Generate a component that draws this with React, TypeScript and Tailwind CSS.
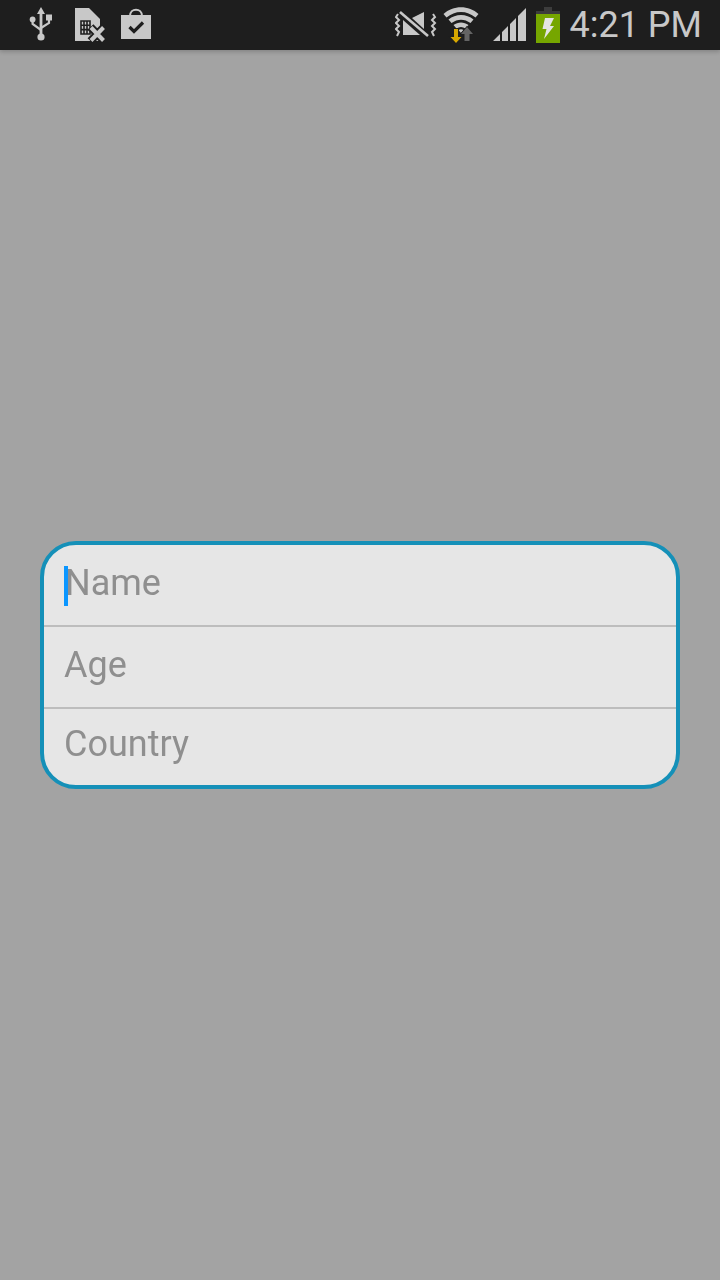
const fieldText = "text-[36px] leading-none text-[#8f8f8f]";

const UsbIcon = () => (
  <svg width="24" height="36" viewBox="0 0 24 36" className="text-[#c8c8c8]">
    <path d="M12 0 L16 7 H13.4 V27 H10.6 V7 H8 Z" fill="currentColor" />
    <circle cx="12" cy="30" r="3.6" fill="currentColor" />
    <circle cx="3.6" cy="12.5" r="2.9" fill="currentColor" />
    <rect x="17" y="7.5" width="6" height="6" fill="currentColor" />
    <path d="M3.6 13 V17 L12 23" stroke="currentColor" strokeWidth="2.2" fill="none" />
    <path d="M20 13 V16 L12 21" stroke="currentColor" strokeWidth="2.2" fill="none" />
  </svg>
);

const SimIcon = () => (
  <svg width="30" height="36" viewBox="0 0 30 36">
    <path d="M0 1 H14 L25 12 V34 H0 Z" fill="#c8c8c8" />
    <path d="M6 14 H15 V27 H6 Z M9 14 V27 M12 14 V27 M6 18.3 H15 M6 22.6 H15" stroke="#1e1e1e" strokeWidth="1.6" fill="none" />
    <path d="M15.5 20 L29 34 M29 20 L15.5 34" stroke="#1e1e1e" strokeWidth="8" />
    <path d="M16 20.5 L28.5 33.5 M28.5 20.5 L16 33.5" stroke="#c8c8c8" strokeWidth="4" />
  </svg>
);

const BagIcon = () => (
  <svg width="32" height="32" viewBox="0 0 32 32">
    <path d="M10 8 C10 -0.5 22 -0.5 22 8" stroke="#c8c8c8" strokeWidth="2" fill="none" />
    <rect x="1" y="7" width="30" height="24" fill="#c8c8c8" />
    <path d="M9.5 19 L14 23.5 L23 14.5" stroke="#1e1e1e" strokeWidth="3.2" fill="none" />
  </svg>
);

const MuteIcon = () => (
  <svg width="42" height="28" viewBox="0 0 42 28">
    <path d="M3 3 L1 6 L4 9 L1 12 L4 15 L1 18 L4 21 L2 25" stroke="#c8c8c8" strokeWidth="2" fill="none" />
    <path d="M38 3 L40 6 L37 9 L40 12 L37 15 L40 18 L37 21 L39 25" stroke="#c8c8c8" strokeWidth="2" fill="none" />
    <path d="M29 1 V18 L17 7 Z" fill="#c8c8c8" />
    <path d="M8 9 V24 H25 Z" fill="#c8c8c8" />
    <path d="M5 1 L33 25" stroke="#c8c8c8" strokeWidth="2.6" />
  </svg>
);

const WifiIcon = () => (
  <svg width="36" height="38" viewBox="0 0 36 38">
    <path d="M0.5 8 C10 -1 26 -1 35.5 8 L32.5 11.5 C24 4 12 4 3.5 11.5 Z" fill="#c8c8c8" />
    <path d="M5.5 13.5 C12.5 7.5 23.5 7.5 30.5 13.5 L27.5 17 C21.5 12.5 14.5 12.5 8.5 17 Z" fill="#c8c8c8" />
    <path d="M10.5 19 C15 15.5 21 15.5 25.5 19 L22.5 22.5 C19.5 20.5 16.5 20.5 13.5 22.5 Z" fill="#c8c8c8" />
    <path d="M15.5 24 C17 23 19 23 20.5 24 L18 27 Z" fill="#c8c8c8" />
    <path d="M24 21 L30 28 H26.5 V35 H21.5 V28 H18 Z" fill="#646464" stroke="#1e1e1e" strokeWidth="1.5" paintOrder="stroke" />
    <path d="M11 23 H15 V31 H18.5 L13 37 L7.5 31 H11 Z" fill="#d8a800" stroke="#1e1e1e" strokeWidth="1.5" paintOrder="stroke" />
  </svg>
);

const SignalIcon = () => (
  <svg width="33" height="34" viewBox="0 0 33 34">
    <path d="M0 33 L7 26 V33 Z M9 33 V24 L15 18 V33 Z M17 33 V16 L23 10 V33 Z M25 33 V8 L33 0 V33 Z" fill="#c8c8c8" />
  </svg>
);

const BatteryIcon = () => (
  <svg width="24" height="36" viewBox="0 0 24 36">
    <rect x="8" y="0" width="8" height="4" fill="#3c3c3c" />
    <rect x="0" y="4" width="24" height="3" fill="#3c3c3c" />
    <rect x="0" y="7" width="24" height="29" fill="#76a600" />
    <path d="M9 11 H18 L14 19 H18 L8 32 L10.5 22 H6.5 Z" fill="#e4e4e4" />
  </svg>
);

const App = () => {
  return (
    <div className="flex h-[1280px] w-[720px] flex-col bg-[#a3a3a3] font-['Roboto',sans-serif]">
      {/* status bar */}
      <header className="flex h-[50px] shrink-0 items-center justify-between bg-[#1e1e1e] pl-[29px] pr-[18px] shadow-[0_2px_4px_rgba(0,0,0,0.18)]">
        <div className="flex items-center">
          <UsbIcon />
          <div className="ml-[22px]"><SimIcon /></div>
          <div className="mb-[3px] ml-[15px]"><BagIcon /></div>
        </div>
        <div className="flex items-center">
          <MuteIcon />
          <div className="ml-[6px]"><WifiIcon /></div>
          <div className="ml-[14px]"><SignalIcon /></div>
          <div className="ml-[10px]"><BatteryIcon /></div>
          <span className="ml-[10px] text-[36px] font-normal leading-none text-[#c8c8c8]">4:21 PM</span>
        </div>
      </header>

      {/* form */}
      <main className="flex flex-1 flex-col px-10 pt-[491px]">
        <div className="flex h-[248px] flex-col overflow-hidden rounded-[36px] border-4 border-[#1590b8] bg-[#e6e6e6] will-change-transform">
          <div className="flex h-[82px] items-center border-b-2 border-[#bdbdbd] pb-1 pl-5">
            <span className="mr-[-3px] mt-[6px] h-10 w-1 bg-[#0a96ff]" />
            <span className={fieldText}>Name</span>
          </div>
          <div className="flex h-[82px] items-center border-b-2 border-[#bdbdbd] pb-1 pl-5">
            <span className={fieldText}>Age</span>
          </div>
          <div className="flex flex-1 items-center pb-[6px] pl-5">
            <span className={fieldText}>Country</span>
          </div>
        </div>
      </main>
    </div>
  );
};

export default App;
